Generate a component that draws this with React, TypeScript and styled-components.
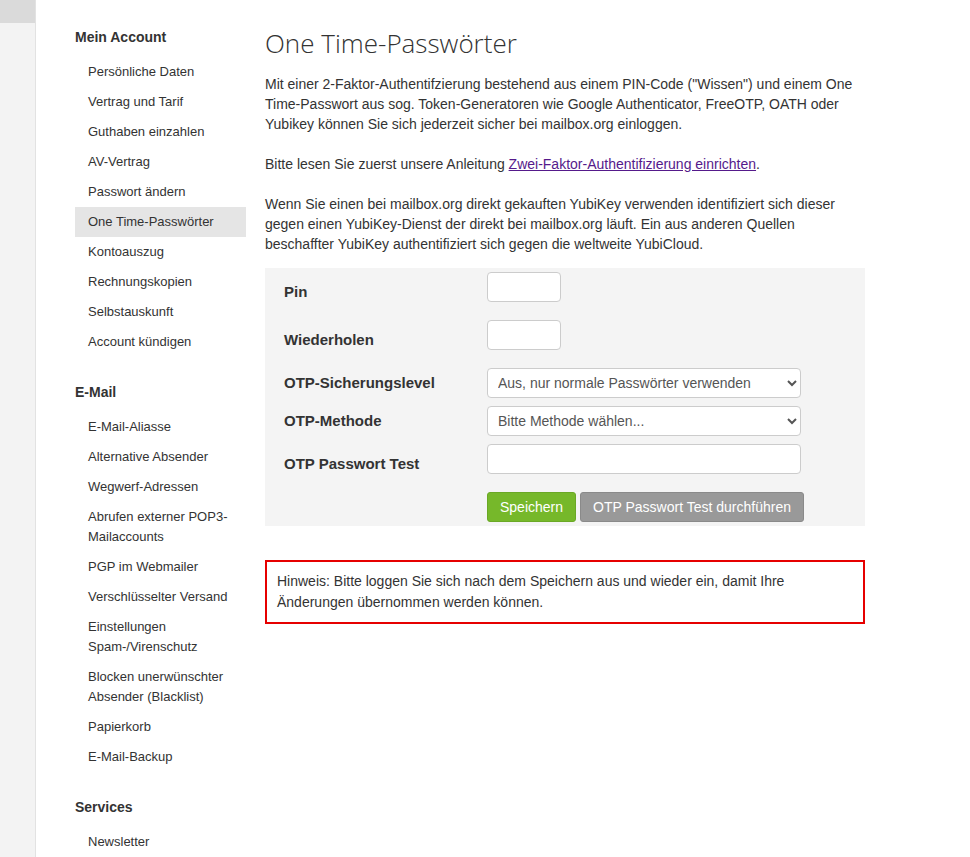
import React from "react";
import styled, { createGlobalStyle } from "styled-components";

const GlobalStyle = createGlobalStyle`
    html, body {
        margin: 0;
        padding: 0;
        overflow: hidden;
        background: #fff;
    }
    body {
        font-family: "Liberation Sans", Arial, sans-serif;
        font-size: 14px;
        color: #333;
    }
`;

interface NavGroup {
    title: string;
    items: string[];
}

const navGroups: NavGroup[] = [
    {
        title: "Mein Account",
        items: [
            "Persönliche Daten",
            "Vertrag und Tarif",
            "Guthaben einzahlen",
            "AV-Vertrag",
            "Passwort ändern",
            "One Time-Passwörter",
            "Kontoauszug",
            "Rechnungskopien",
            "Selbstauskunft",
            "Account kündigen",
        ],
    },
    {
        title: "E-Mail",
        items: [
            "E-Mail-Aliasse",
            "Alternative Absender",
            "Wegwerf-Adressen",
            "Abrufen externer POP3-Mailaccounts",
            "PGP im Webmailer",
            "Verschlüsselter Versand",
            "Einstellungen Spam-/Virenschutz",
            "Blocken unerwünschter Absender (Blacklist)",
            "Papierkorb",
            "E-Mail-Backup",
        ],
    },
    {
        title: "Services",
        items: ["Newsletter"],
    },
];

const ACTIVE = "One Time-Passwörter";

export default function App() {
    return (
        <>
            <GlobalStyle />
            <Page>
                <Strip>
                    <StripTop />
                </Strip>
                <Sidebar>
                    {navGroups.map((group) => (
                        <Group key={group.title}>
                            <GroupTitle>{group.title}</GroupTitle>
                            <NavList>
                                {group.items.map((item) => (
                                    <NavItem key={item} active={item === ACTIVE}>
                                        {item}
                                    </NavItem>
                                ))}
                            </NavList>
                        </Group>
                    ))}
                </Sidebar>
                <Content>
                    <Title>One Time-Passwörter</Title>
                    <Text>
                        Mit einer 2-Faktor-Authentifzierung bestehend aus einem PIN-Code ("Wissen") und einem One
                        Time-Passwort aus sog. Token-Generatoren wie Google Authenticator, FreeOTP, OATH oder Yubikey
                        können Sie sich jederzeit sicher bei mailbox.org einloggen.
                    </Text>
                    <Text>
                        Bitte lesen Sie zuerst unsere Anleitung{" "}
                        <Link href="#">Zwei-Faktor-Authentifizierung einrichten</Link>.
                    </Text>
                    <Text>
                        Wenn Sie einen bei mailbox.org direkt gekauften YubiKey verwenden identifiziert sich dieser
                        gegen einen YubiKey-Dienst der direkt bei mailbox.org läuft. Ein aus anderen Quellen
                        beschaffter YubiKey authentifiziert sich gegen die weltweite YubiCloud.
                    </Text>

                    <FormBox>
                        <Label>Pin</Label>
                        <TextInput type="password" size="small" />
                        <Label>Wiederholen</Label>
                        <TextInput type="password" size="small" />
                        <Label>OTP-Sicherungslevel</Label>
                        <Select defaultValue="off">
                            <option value="off">Aus, nur normale Passwörter verwenden</option>
                            <option value="on">OTP immer verwenden</option>
                        </Select>
                        <Label>OTP-Methode</Label>
                        <Select defaultValue="">
                            <option value="">Bitte Methode wählen...</option>
                            <option value="totp">TOTP</option>
                            <option value="yubikey">YubiKey</option>
                        </Select>
                        <Label>OTP Passwort Test</Label>
                        <TextInput type="text" size="wide" />
                        <span />
                        <Buttons>
                            <Button variant="primary">Speichern</Button>
                            <Button variant="secondary">OTP Passwort Test durchführen</Button>
                        </Buttons>
                    </FormBox>

                    <Notice>
                        Hinweis: Bitte loggen Sie sich nach dem Speichern aus und wieder ein, damit Ihre Änderungen
                        übernommen werden können.
                    </Notice>
                </Content>
            </Page>
        </>
    );
}

const Page = styled.div`
    display: flex;
    align-items: flex-start;
    height: 100vh;
`;

const Strip = styled.div`
    flex: 0 0 35px;
    align-self: stretch;
    background: #f3f3f3;
    border-right: 1px solid #e2e2e2;
`;

const StripTop = styled.div`
    height: 23px;
    background: #dadada;
`;

const Sidebar = styled.nav`
    width: 171px;
    margin-left: 39px;
    padding-top: 27px;
    display: flex;
    flex-direction: column;
    gap: 25px;
`;

const Group = styled.div`
    display: flex;
    flex-direction: column;
    gap: 10px;
`;

const GroupTitle = styled.div`
    font-size: 14px;
    font-weight: bold;
    line-height: 20px;
    color: #333;
`;

const NavList = styled.ul`
    list-style: none;
    margin: 0;
    padding: 0;
`;

const NavItem = styled.li<{ active?: boolean }>`
    font-size: 13px;
    line-height: 20px;
    padding: 5px 13px;
    color: #333;
    background: ${({ active }) => (active ? "#e5e5e5" : "transparent")};
`;

const Content = styled.main`
    width: 600px;
    margin-left: 19px;
`;

const Title = styled.h1`
    font-family: "Open Sans", "Liberation Sans", sans-serif;
    font-weight: 300;
    font-size: 26px;
    line-height: 36px;
    color: #333;
    margin: 25px 0 13px;
`;

const Text = styled.p`
    margin: 0 0 20px;
    line-height: 20px;
    &:last-of-type {
        margin-bottom: 14px;
    }
`;

const Link = styled.a`
    color: #551a8b;
    text-decoration: underline;
`;

const FormBox = styled.div`
    display: grid;
    grid-template-columns: 222px 1fr;
    row-gap: 8px;
    align-items: center;
    background: #f4f4f4;
    padding: 4px 0;
`;

const Label = styled.label`
    padding-left: 19px;
    font-size: 15px;
    font-weight: bold;
    line-height: 16px;
    color: #333;
`;

const fieldBase = `
    box-sizing: border-box;
    height: 30px;
    border: 1px solid #ccc;
    border-radius: 4px;
    background: #fff;
    font-family: "Liberation Sans", Arial, sans-serif;
    font-size: 14px;
    color: #555;
`;

const TextInput = styled.input<{ size: "small" | "wide" }>`
    ${fieldBase}
    width: ${({ size }) => (size === "small" ? "74px" : "314px")};
    margin-bottom: 10px;
    padding: 0 10px;
`;

const Select = styled.select`
    ${fieldBase}
    width: 314px;
    padding: 0 6px;
`;

const Buttons = styled.div`
    display: flex;
    gap: 4px;
`;

const Button = styled.button<{ variant: "primary" | "secondary" }>`
    height: 30px;
    padding: 0 12px;
    border-radius: 3px;
    border: 1px solid ${({ variant }) => (variant === "primary" ? "#6aa825" : "#8a8a8a")};
    background: ${({ variant }) => (variant === "primary" ? "#76b82a" : "#999")};
    color: #fff;
    font-family: "Liberation Sans", Arial, sans-serif;
    font-size: 14px;
    cursor: pointer;
`;

const Notice = styled.div`
    margin-top: 34px;
    border: 2px solid #e60000;
    padding: 9px 10px;
    line-height: 21px;
`;
